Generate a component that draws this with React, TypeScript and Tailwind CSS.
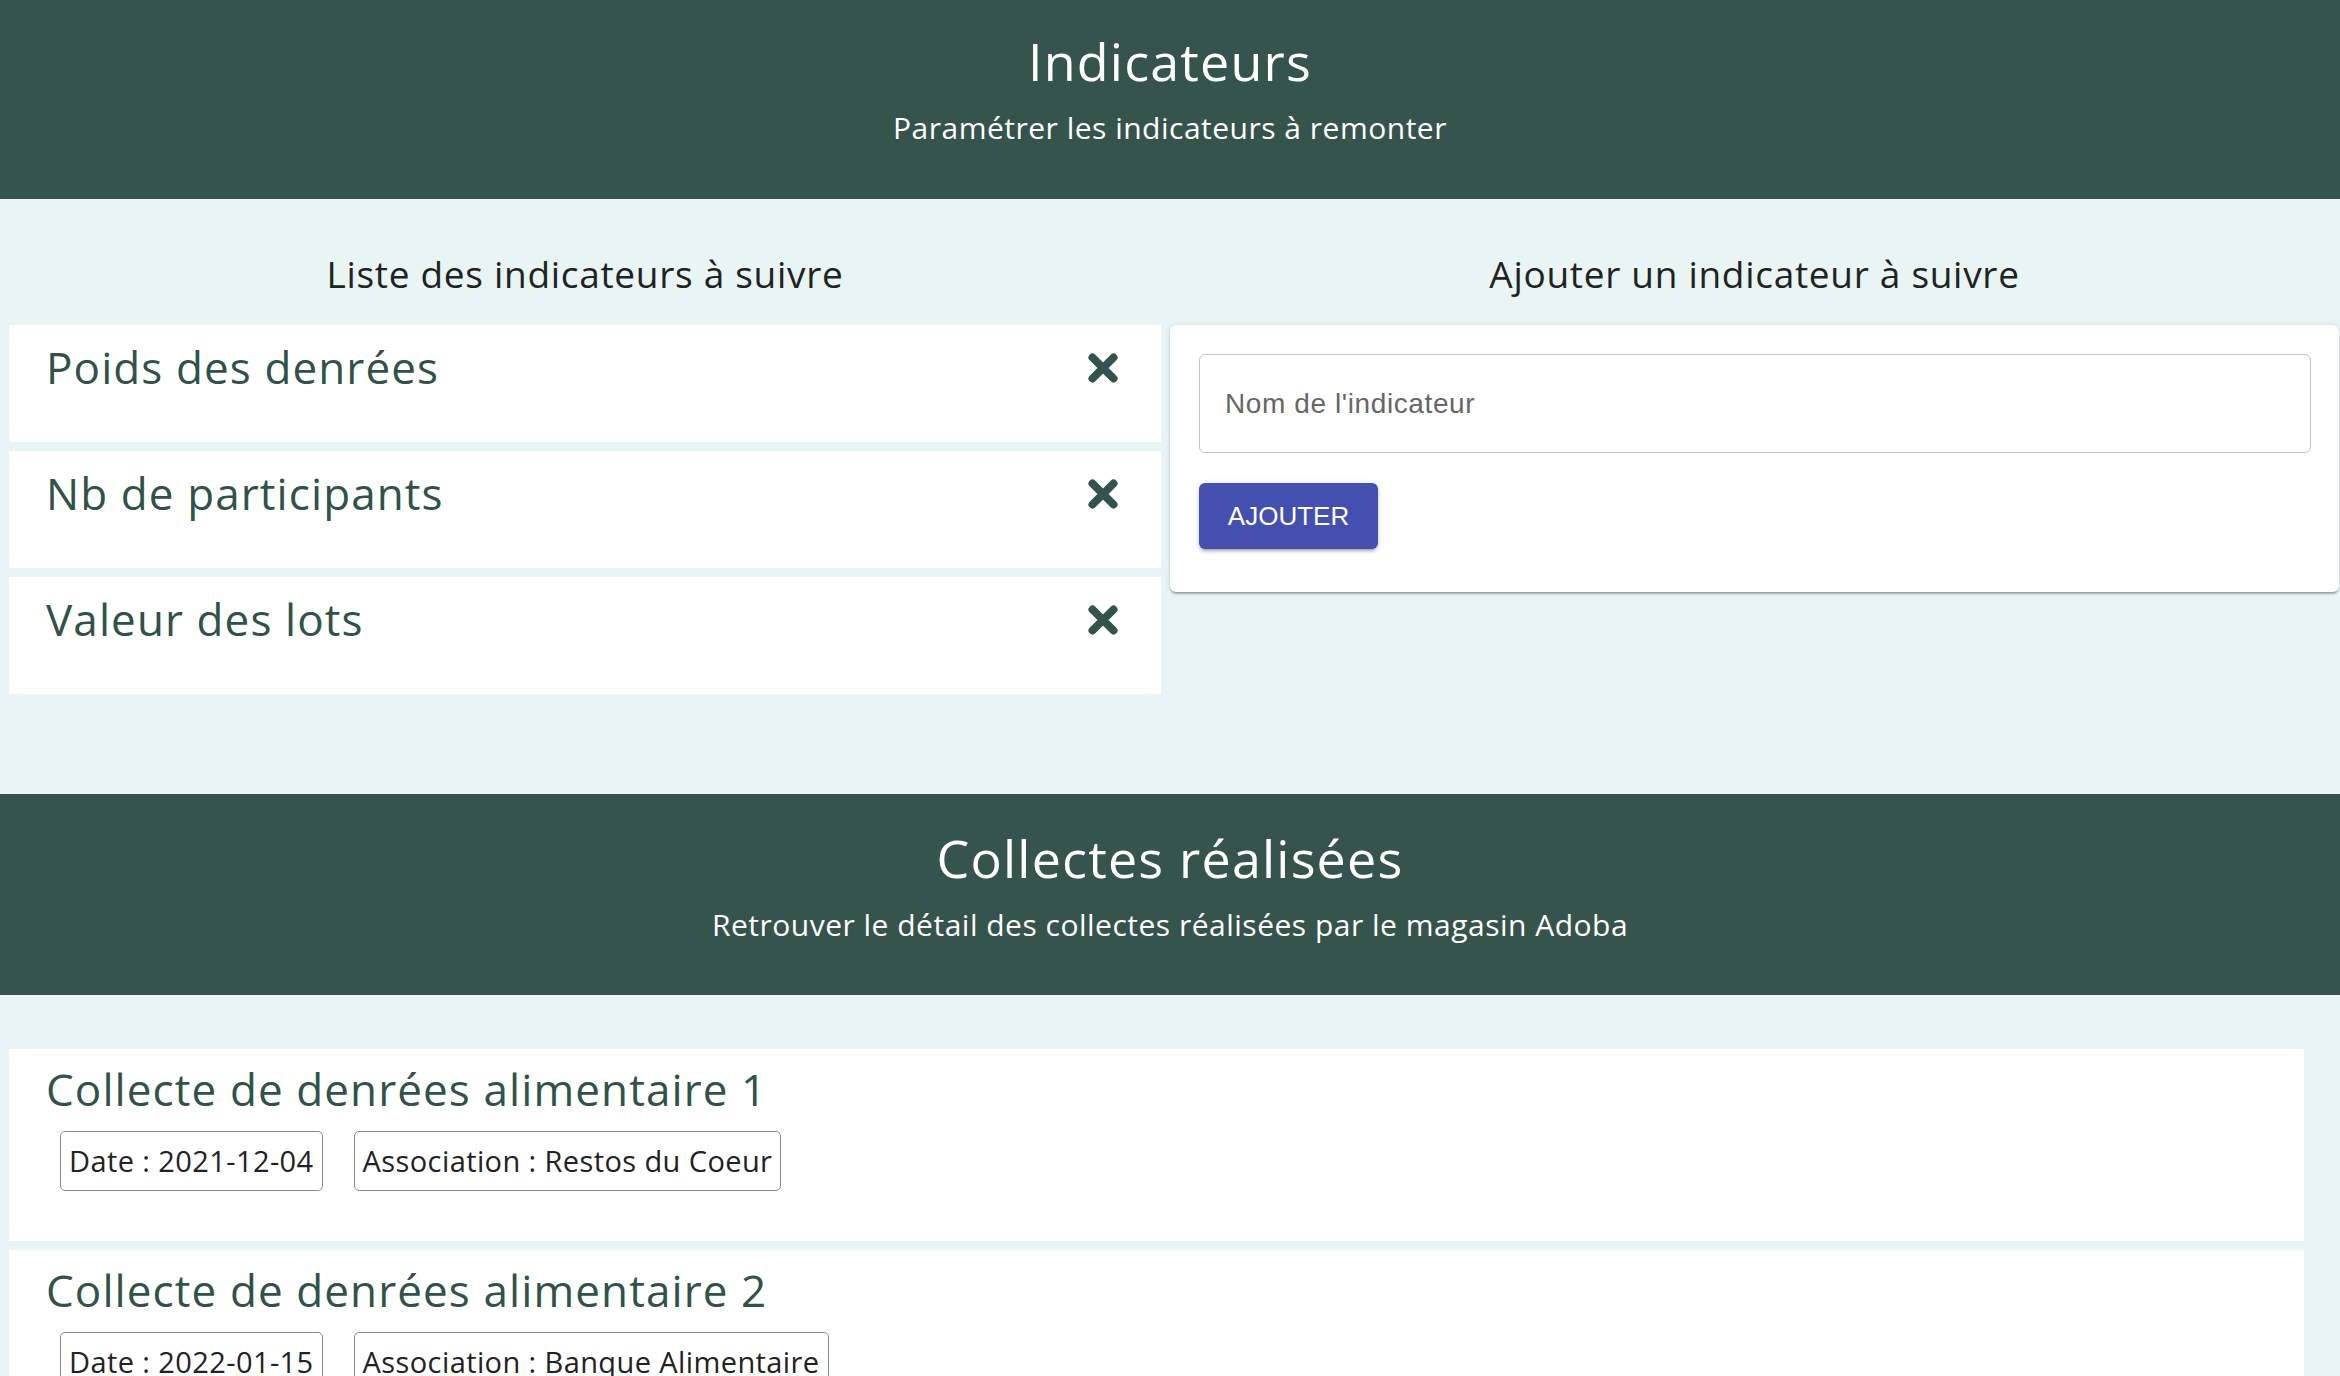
import React from 'react';

const indicators = ['Poids des denrées', 'Nb de participants', 'Valeur des lots'];

const collectes = [
  { title: 'Collecte de denrées alimentaire 1', date: '2021-12-04', association: 'Restos du Coeur' },
  { title: 'Collecte de denrées alimentaire 2', date: '2022-01-15', association: 'Banque Alimentaire' },
];

const poppins = "font-['Open_Sans',sans-serif]";

function Band({ title, subtitle, height, top }: { title: string; subtitle: string; height: string; top: string }) {
  return (
    <div className={`flex flex-col items-center bg-[#35544c] text-white ${height} ${top} ${poppins}`}>
      <h1 className="text-[52px] leading-[60px] font-normal tracking-[1.2px]">{title}</h1>
      <p className="mt-[19px] text-[30px] leading-[36px] tracking-[0.5px]">{subtitle}</p>
    </div>
  );
}

function CloseIcon() {
  return (
    <svg width="30" height="30" viewBox="0 0 30 30" className="shrink-0 mt-[12px]">
      <path d="M4.5 4.5 L25.5 25.5 M25.5 4.5 L4.5 25.5" stroke="#33544c" strokeWidth="8" strokeLinecap="round" />
    </svg>
  );
}

export default function App() {
  return (
    <div className={`h-screen overflow-hidden bg-[#e9f4f5] ${poppins}`}>
      <Band title="Indicateurs" subtitle="Paramétrer les indicateurs à remonter" height="h-[199px]" top="pt-[31px]" />

      <div className="grid grid-cols-2 pb-[100px]">
        <div className="px-[9px]">
          <h2 className="pt-[53px] text-center text-[37px] leading-[44px] tracking-[0.7px] text-[#1f2321]">
            Liste des indicateurs à suivre
          </h2>
          <div className="mt-[29px] flex flex-col gap-[9px]">
            {indicators.map((name) => (
              <div key={name} className="flex h-[117px] items-start justify-between bg-white pl-[37px] pr-[43px] pt-[16px]">
                <span className="text-[44px] leading-[52px] tracking-[1.1px] text-[#2f5249]">{name}</span>
                <CloseIcon />
              </div>
            ))}
          </div>
        </div>

        <div className="pr-[1px]">
          <h2 className="pt-[53px] text-center text-[37px] leading-[44px] tracking-[0.7px] text-[#1f2321]">
            Ajouter un indicateur à suivre
          </h2>
          <div className="mt-[29px] rounded-[6px] bg-white pl-[29px] pr-[28px] pt-[29px] pb-[43px] shadow-[0_3px_2px_-1px_rgba(0,0,0,0.2),0_1px_2px_0_rgba(0,0,0,0.14),0_1px_5px_0_rgba(0,0,0,0.12)]">
            <div className="flex h-[99px] items-center rounded-[6px] border border-[#c4c4c4] pl-[25px] font-['Liberation_Sans',sans-serif] text-[28px] tracking-[0.6px] text-[#666666]">
              Nom de l'indicateur
            </div>
            <button className="mt-[30px] flex h-[66px] w-[179px] items-center justify-center rounded-[6px] bg-[#4350af] font-['Liberation_Sans',sans-serif] text-[26px] uppercase text-white shadow-[0_4px_2px_-3px_rgba(0,0,0,0.2),0_3px_3px_0_rgba(0,0,0,0.14),0_1px_7px_0_rgba(0,0,0,0.12)]">
              Ajouter
            </button>
          </div>
        </div>
      </div>

      <Band
        title="Collectes réalisées"
        subtitle="Retrouver le détail des collectes réalisées par le magasin Adoba"
        height="h-[201px]"
        top="pt-[34px]"
      />

      <div className="flex flex-col gap-[9px] pl-[9px] pr-[36px] pt-[54px]">
        {collectes.map((c) => (
          <div key={c.title} className="h-[192px] bg-white pl-[37px] pt-[14px]">
            <h3 className="text-[44px] leading-[52px] tracking-[1.1px] text-[#2f5249]">{c.title}</h3>
            <div className="ml-[14px] mt-[16px] flex gap-[31px]">
              <span className="flex h-[60px] items-center rounded-[5px] border border-[#8a8a8a] px-[8px] text-[29px] tracking-[0.4px] text-[#222222]">
                Date : {c.date}
              </span>
              <span className="flex h-[60px] items-center rounded-[5px] border border-[#8a8a8a] px-[8px] text-[29px] tracking-[0.4px] text-[#222222]">
                Association : {c.association}
              </span>
            </div>
          </div>
        ))}
      </div>
    </div>
  );
}
